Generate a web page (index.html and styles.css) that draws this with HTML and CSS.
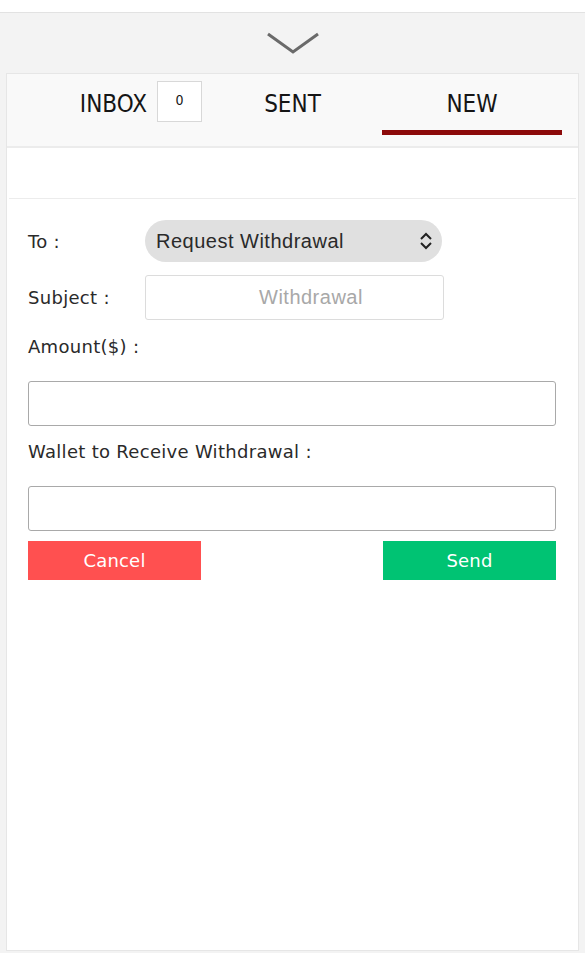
FILE: index.html
```html
<!DOCTYPE html>
<html>
<head>
<meta charset="utf-8">
<link rel="stylesheet" href="styles.css">
</head>
<body>
<div class="topbar"></div>
<div class="backdrop">
  <div class="chev">
    <svg width="54" height="26" viewBox="0 0 54 26"><polyline points="2,2 27,20 52,2" fill="none" stroke="#6a6a6a" stroke-width="3"/></svg>
  </div>
  <div class="panel">
    <div class="tabs">
      <div class="tab tab-inbox"><span>INBOX</span><span class="badge">0</span></div>
      <div class="tab tab-sent"><span>SENT</span></div>
      <div class="tab tab-new active"><span>NEW</span></div>
    </div>
    <div class="content">
      <div class="blank"></div>
      <form class="form">
        <div class="row">
          <label class="lbl">To :</label>
          <div class="select">
            <span>Request Withdrawal</span>
            <svg width="14" height="18" viewBox="0 0 14 18"><polyline points="2,7 7,2 12,7" fill="none" stroke="#222" stroke-width="2"/><polyline points="2,11 7,16 12,11" fill="none" stroke="#222" stroke-width="2"/></svg>
          </div>
        </div>
        <div class="row row-subject">
          <label class="lbl">Subject :</label>
          <div class="subject">Withdrawal</div>
        </div>
        <div class="lbl lbl-amount">Amount($) :</div>
        <div class="field"></div>
        <div class="lbl lbl-wallet">Wallet to Receive Withdrawal :</div>
        <div class="field"></div>
        <div class="buttons">
          <button type="button" class="btn cancel">Cancel</button>
          <button type="button" class="btn send">Send</button>
        </div>
      </form>
    </div>
  </div>
</div>
</body>
</html>
```
FILE: styles.css
```css
* { box-sizing: border-box; }
html, body { margin: 0; padding: 0; }
body {
  width: 585px;
  height: 954px;
  overflow: hidden;
  background: #ffffff;
  font-family: "DejaVu Sans", Roboto, sans-serif;
  color: #222;
}
.topbar {
  height: 13px;
  background: #ffffff;
  border-bottom: 1px solid #e2e2e2;
}
.backdrop {
  background: #f3f3f3;
  height: 940px;
  padding: 0 6px;
}
.chev {
  height: 60px;
  display: flex;
  justify-content: center;
  padding-top: 19px;
}
.panel {
  background: #ffffff;
  border: 1px solid #e6e6e6;
  height: 878px;
  display: flex;
  flex-direction: column;
}
.tabs {
  display: flex;
  height: 74px;
  background: #f9f9f9;
  border-bottom: 2px solid #ececec;
  padding-left: 14px;
}
.tab {
  width: 180px;
  display: flex;
  align-items: flex-start;
  justify-content: center;
  font-family: "DejaVu Sans Condensed", "DejaVu Sans", sans-serif;
  font-size: 24px;
  line-height: 1;
  color: #151515;
  padding-top: 18px;
  position: relative;
}
.tab-inbox { justify-content: flex-end; padding-right: 1px; gap: 10px; padding-top: 7px; width: 182px; }
.tab-inbox span:first-child { padding-top: 11px; }
.tab-sent { width: 179px; }
.badge {
  width: 45px;
  height: 41px;
  border: 1px solid #d8d8d8;
  background: #fff;
  font-size: 14px;
  display: flex;
  justify-content: center;
  padding-top: 11px;
}
.tab-new.active::after {
  content: "";
  position: absolute;
  left: 0;
  right: 0;
  bottom: 11px;
  height: 5px;
  background: #8c0a0a;
}
.content {
  flex: 1;
  margin: 0 2px;
  background: #fff;
}
.blank {
  height: 51px;
  border-bottom: 1px solid #ececec;
}
.form {
  padding: 21px 20px 0 19px;
}
.row {
  display: flex;
  align-items: center;
}
.lbl {
  font-size: 18px;
  color: #2a2a2a;
  letter-spacing: 0.3px;
}
.row .lbl { width: 117px; }
.select {
  width: 297px;
  height: 42px;
  background: #e0e0e0;
  border-radius: 21px;
  display: flex;
  align-items: center;
  justify-content: space-between;
  padding: 0 9px 0 11px;
  font-family: "Liberation Sans", Arial, sans-serif;
  font-size: 20px;
  letter-spacing: 0.5px;
  color: #2a2a2a;
}
.row-subject { margin-top: 13px; }
.subject {
  width: 299px;
  height: 45px;
  border: 1px solid #dcdcdc;
  border-radius: 3px;
  display: flex;
  align-items: center;
  padding-left: 113px;
  font-family: "Liberation Sans", Arial, sans-serif;
  font-size: 20px;
  letter-spacing: 0.5px;
  color: #a8a8a8;
}
.lbl-amount { margin-top: 16px; height: 26px; }
.lbl-wallet { margin-top: 15px; height: 26px; }
.field {
  margin-top: 19px;
  height: 45px;
  border: 1px solid #a9a9a9;
  border-radius: 3px;
  background: #fff;
}
.buttons {
  display: flex;
  justify-content: space-between;
  margin-top: 10px;
}
.btn {
  width: 173px;
  height: 39px;
  border: none;
  color: #fff;
  font-family: "DejaVu Sans", Roboto, sans-serif;
  font-size: 18px;
  letter-spacing: 0.2px;
  padding: 0;
}
.cancel { background: #ff5050; }
.send { background: #00c373; }
```
